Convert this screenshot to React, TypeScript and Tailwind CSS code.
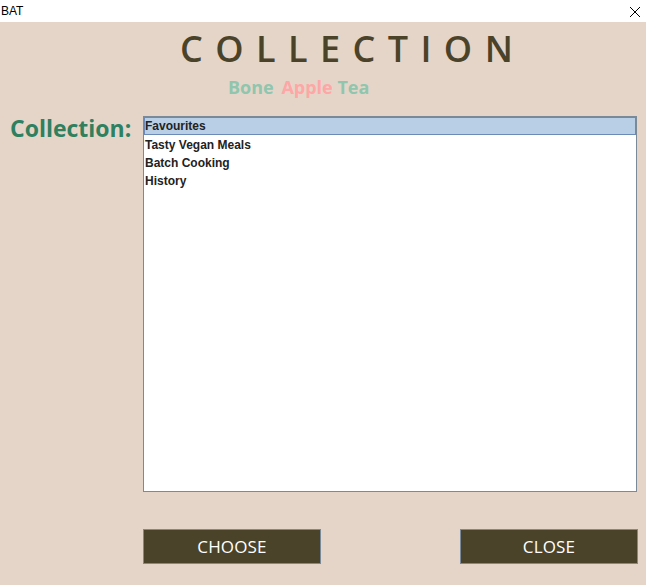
import React from "react";

export default function App() {
  const items = ["Favourites", "Tasty Vegan Meals", "Batch Cooking", "History"];
  return (
    <div className="w-[646px] h-[585px] flex flex-col bg-[#e5d5c9] overflow-hidden">
      <div className="h-[22px] bg-white flex items-center justify-between pl-[1px] pr-[5px]">
        <span className="text-[12px] text-black" style={{ fontFamily: '"Liberation Sans", Arial, sans-serif' }}>BAT</span>
        <svg width="12" height="12" viewBox="0 0 12 12" className="mt-[1px]">
          <path d="M1 1 L11 11 M11 1 L1 11" stroke="#000" strokeWidth="1" />
        </svg>
      </div>
      <div className="flex-1 flex flex-col" style={{ fontFamily: '"Open Sans", "Noto Sans", sans-serif' }}>
        <div className="pl-[180px] pt-[3px] h-[48px] text-[36px] font-semibold leading-[48px] tracking-[0.345em] text-[#4b4329] whitespace-nowrap">
          COLLECTION
        </div>
        <div className="pl-[228px] mt-[2px] h-[30px] text-[18px] font-bold leading-[30px] whitespace-nowrap">
          <span className="text-[#8fc6ad] mr-[3px]">Bone</span>{" "}
          <span className="text-[#ffa6a6]">Apple</span>{" "}
          <span className="text-[#8fc6ad]">Tea</span>
        </div>
        <div className="flex mt-[14px]">
          <div className="w-[143px] pl-[10px] text-[23px] font-bold leading-[24px] text-[#2e805f] whitespace-nowrap">
            Collection:
          </div>
          <div className="w-[494px] h-[376px] bg-white border border-[#7a8a99] flex flex-col" style={{ fontFamily: '"Liberation Sans", Arial, sans-serif' }}>
            {items.map((it, i) => (
              <div
                key={it}
                className={
                  i === 0
                    ? "h-[18px] bg-[#b8cfe6] border border-[#6b8ab8] pl-0 text-[12px] font-bold leading-[16px] text-[#222]"
                    : "h-[18px] pl-0 text-[12px] font-bold leading-[18px] text-[#222] border border-transparent"
                }
              >
                {it}
              </div>
            ))}
          </div>
        </div>
        <div className="flex justify-between pl-[143px] pr-[8px] mt-[37px]">
          <button className="w-[178px] h-[35px] bg-[#4b4329] border border-[#7a8a99] text-white text-[17px] tracking-[0.01em]">
            CHOOSE
          </button>
          <button className="w-[178px] h-[35px] bg-[#4b4329] border border-[#7a8a99] text-white text-[17px] tracking-[0.01em]">
            CLOSE
          </button>
        </div>
      </div>
    </div>
  );
}
